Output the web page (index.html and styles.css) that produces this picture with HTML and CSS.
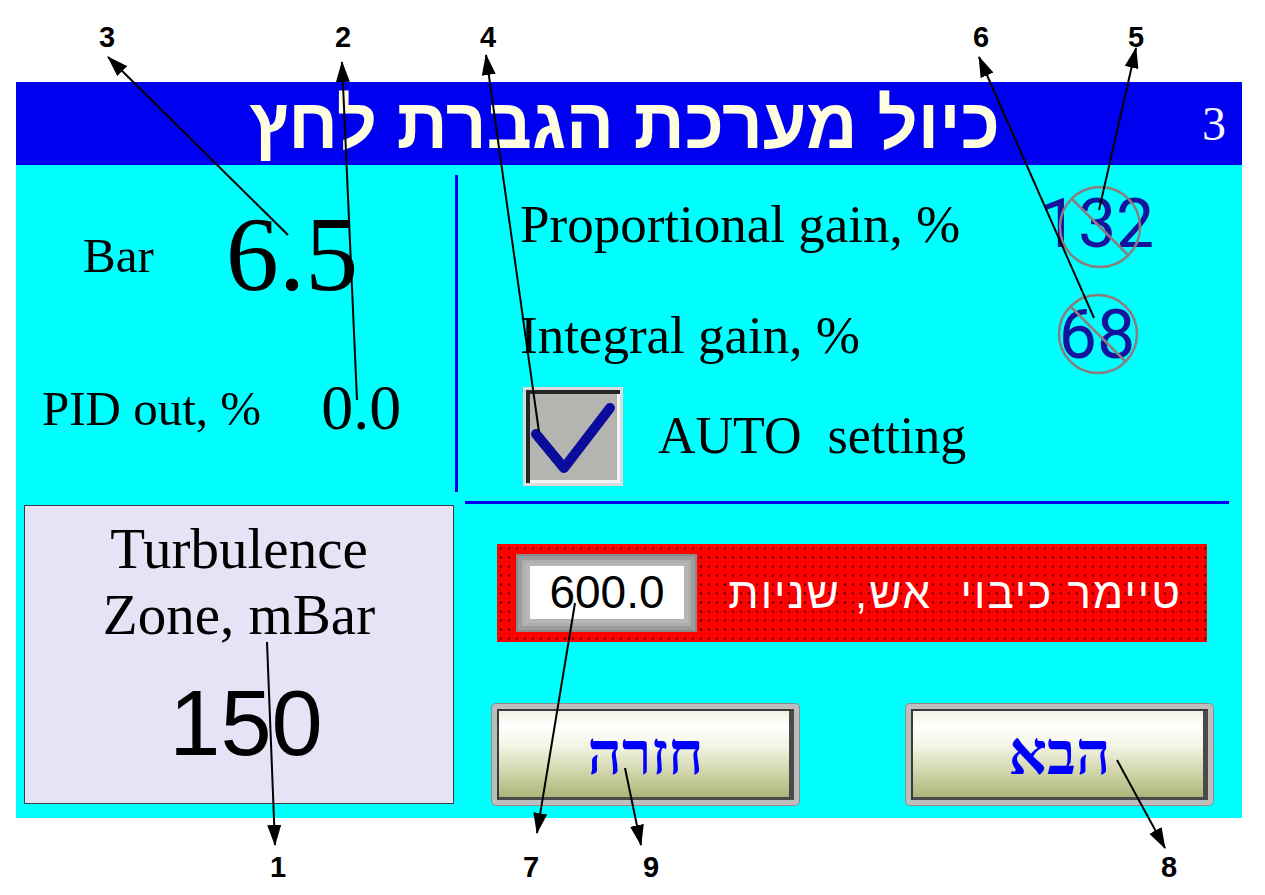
FILE: index.html
```html
<!DOCTYPE html>
<html lang="he">

<head>
    <meta charset="UTF-8">
    <meta name="viewport" content="width=device-width, initial-scale=1.0">
    <title>כיול מערכת הגברת לחץ</title>
    <link rel="stylesheet" href="styles.css">
</head>

<body>

    <div class="screen">
        <header class="title">
            <h1 dir="rtl">כיול מערכת הגברת לחץ</h1>
            <span class="page-no">3</span>
        </header>

        <div class="main">
            <div class="left">
                <div class="readings">
                    <div class="reading-row">
                        <span class="bar-label">Bar</span>
                        <span class="bar-value">6.5</span>
                    </div>
                    <div class="reading-row pid-row">
                        <span class="pid-label">PID out, %</span>
                        <span class="pid-value">0.0</span>
                    </div>
                </div>
                <div class="turb">
                    <p class="turb-title">Turbulence<br>Zone, mBar</p>
                    <p class="turb-value">150</p>
                </div>
            </div>

            <div class="right">
                <div class="gains">
                    <div class="gain-row">
                        <span class="gain-label">Proportional gain, %</span>
                        <span class="gain-value" lang="en">132</span>
                    </div>
                    <div class="gain-row integral-row">
                        <span class="gain-label">Integral gain, %</span>
                        <span class="gain-value" lang="en">68</span>
                    </div>
                    <div class="auto-row">
                        <div class="checkbox">
                            <svg width="93" height="93" viewBox="0 0 93 93">
                                <path d="M10 44 L38 78 L84 18" fill="none" stroke="#0b0b9c" stroke-width="10"
                                    stroke-linecap="round" stroke-linejoin="round" />
                            </svg>
                        </div>
                        <span class="auto-label">AUTO  setting</span>
                    </div>
                </div>

                <div class="rule"></div>

                <div class="timer">
                    <div class="timer-input">
                        <div class="timer-field">600.0</div>
                    </div>
                    <span class="timer-label" dir="rtl">טיימר כיבוי  אש, שניות</span>
                </div>

                <div class="buttons">
                    <button class="nav-btn">חזרה</button>
                    <button class="nav-btn">הבא</button>
                </div>
            </div>
        </div>
    </div>

    <!-- callout numbers and arrows drawn over the screen -->
    <svg class="notes" width="1265" height="895" viewBox="0 0 1265 895">
        <defs>
            <marker id="head" markerUnits="userSpaceOnUse" markerWidth="22" markerHeight="14" refX="20" refY="7"
                orient="auto">
                <path d="M0 0 L21 7 L0 14 Z" fill="#000" />
            </marker>
        </defs>

        <g class="marks">
            <circle cx="1100" cy="227" r="40" />
            <line x1="1072" y1="199" x2="1128" y2="255" />
            <circle cx="1098" cy="334" r="39" />
            <line x1="1070" y1="306" x2="1126" y2="362" />
        </g>

        <g class="arrows">
            <line x1="288" y1="235" x2="108" y2="57" />
            <line x1="357" y1="400" x2="342" y2="62" />
            <line x1="539" y1="432" x2="486" y2="55" />
            <line x1="1094" y1="318" x2="979" y2="57" />
            <line x1="1099" y1="210" x2="1136" y2="48" />
            <line x1="267" y1="642" x2="275" y2="845" />
            <line x1="575" y1="603" x2="537" y2="833" />
            <line x1="625" y1="768" x2="641" y2="845" />
            <line x1="1117" y1="760" x2="1165" y2="848" />
        </g>

        <g class="nums">
            <text x="107" y="47">3</text>
            <text x="343" y="47">2</text>
            <text x="488" y="47">4</text>
            <text x="981" y="47">6</text>
            <text x="1136" y="47">5</text>
            <text x="278" y="877">1</text>
            <text x="531" y="877">7</text>
            <text x="651" y="877">9</text>
            <text x="1169" y="877">8</text>
        </g>
    </svg>

</body>

</html>
```

FILE: styles.css
```css
body {
    margin: 0;
    background-color: #fff;
    font-family: "Liberation Serif", "Times New Roman", serif;
    color: #000;
}

.screen {
    width: 1226px;
    margin: 82px 0 0 16px;
    background-color: #00ffff;
}

/* header bar */
.title {
    display: flex;
    justify-content: flex-end;
    align-items: center;
    height: 83px;
    background-color: #0000f0;
}

.title h1 {
    margin: 0;
    font-family: "Liberation Sans", "DejaVu Sans", sans-serif;
    font-size: 71px;
    font-weight: 700;
    line-height: 1;
    color: #fffde0;
}

.page-no {
    width: 23px;
    margin: 0 17px 0 202px;
    font-size: 48px;
    line-height: 1;
    color: #f4f4ff;
}

.main {
    display: flex;
    height: 653px;
}

/* left column */
.left {
    width: 439px;
}

.readings {
    height: 340px;
    padding-top: 35px;
    box-sizing: border-box;
}

.reading-row {
    display: flex;
    align-items: center;
    height: 110px;
    line-height: 1;
}

.pid-row {
    margin-top: 43px;
}

.bar-label {
    margin-left: 67px;
    font-size: 49px;
}

.bar-value {
    margin-left: 72px;
    font-size: 106px;
}

.pid-label {
    margin-left: 26px;
    font-size: 49px;
}

.pid-value {
    margin-left: 60px;
    font-size: 64px;
}

.turb {
    width: 430px;
    height: 299px;
    margin-left: 8px;
    padding-top: 10px;
    box-sizing: border-box;
    border: 1px solid #3c3c3c;
    background-color: #e4e4f6;
    text-align: center;
}

.turb-title {
    margin: 0;
    font-size: 57px;
    line-height: 66px;
}

.turb-value {
    margin: 29px 0 0;
    padding-left: 14px;
    font-family: "Liberation Sans", Arial, sans-serif;
    font-size: 92px;
    line-height: 1;
}

/* right column */
.right {
    flex: 1;
}

.gains {
    height: 317px;
    margin-top: 10px;
    padding: 9px 0 0 62px;
    box-sizing: border-box;
    border-left: 3px solid #0000f0;
}

.gain-row {
    display: flex;
    align-items: center;
    height: 80px;
    line-height: 1;
}

.integral-row {
    margin-top: 31px;
}

.gain-label {
    font-size: 53px;
}

.gain-value {
    width: 130px;
    margin: 0 80px 0 auto;
    font-family: Roboto, "Liberation Sans", sans-serif;
    font-size: 68px;
    text-align: center;
    color: #14149c;
}

.auto-row {
    display: flex;
    align-items: center;
    height: 100px;
    margin-top: 11px;
}

.checkbox {
    width: 100px;
    height: 99px;
    margin-left: 3px;
    box-sizing: border-box;
    border: 3px solid #dcdcdc;
    background-color: #b4b4b1;
    box-shadow: inset 4px 4px 0 #262626, inset -3px -3px 0 #f4f4f4;
}

.checkbox svg {
    display: block;
}

.auto-label {
    margin-left: 35px;
    font-size: 52px;
    line-height: 1;
    white-space: pre;
}

.rule {
    height: 3px;
    margin: 9px 13px 0 10px;
    background-color: #0000f0;
}

/* timer strip */
.timer {
    display: flex;
    align-items: center;
    width: 710px;
    height: 98px;
    margin: 40px 0 0 42px;
    padding-left: 19px;
    box-sizing: border-box;
    background-color: #ff0000;
    background-image: radial-gradient(circle, #3a0000 0.9px, transparent 1.3px);
    background-size: 8px 9px;
}

.timer-input {
    width: 181px;
    height: 78px;
    padding: 12px 13px 13px 14px;
    box-sizing: border-box;
    background-color: #b6b6b6;
    box-shadow: inset 0 0 0 2px #8a8a8a, inset 0 0 0 6px #9c9c9c, inset 0 0 0 9px #aeaeae;
}

.timer-field {
    height: 100%;
    background-color: #fff;
    font-family: "Liberation Sans", Arial, sans-serif;
    font-size: 46px;
    line-height: 53px;
    text-align: center;
}

.timer-label {
    flex: 1;
    padding-right: 25px;
    font-family: "Liberation Sans", "DejaVu Sans", sans-serif;
    font-size: 44px;
    letter-spacing: 2px;
    line-height: 1;
    color: #fff;
    white-space: pre;
}

/* nav buttons */
.buttons {
    display: flex;
    gap: 107px;
    margin: 62px 0 0 37px;
}

.nav-btn {
    width: 307px;
    height: 101px;
    padding: 0;
    border: 5px solid #bdbdbd;
    border-radius: 4px;
    background-image: linear-gradient(to bottom,
            #eef0dc 0%,
            #ffffff 18%,
            #f4f5e6 40%,
            #d3d7ad 68%,
            #a9b173 100%);
    box-shadow: 0 0 0 1px #8c8c8c, inset 2px 2px 0 #3a3a3a, inset -5px -3px 0 #4a4a4a;
    font-family: "Liberation Serif", "DejaVu Sans", serif;
    font-size: 60px;
    font-weight: 700;
    color: #0000ff;
    cursor: pointer;
}

/* callouts */
.notes {
    position: absolute;
    top: 0;
    left: 0;
    pointer-events: none;
}

.marks circle,
.marks line {
    fill: none;
    stroke: #8a7d7d;
    stroke-width: 2.5;
}

.arrows line {
    stroke: #000;
    stroke-width: 2;
    marker-end: url(#head);
}

.nums text {
    font-family: "Liberation Sans", Arial, sans-serif;
    font-size: 29px;
    font-weight: 700;
    text-anchor: middle;
}
```
